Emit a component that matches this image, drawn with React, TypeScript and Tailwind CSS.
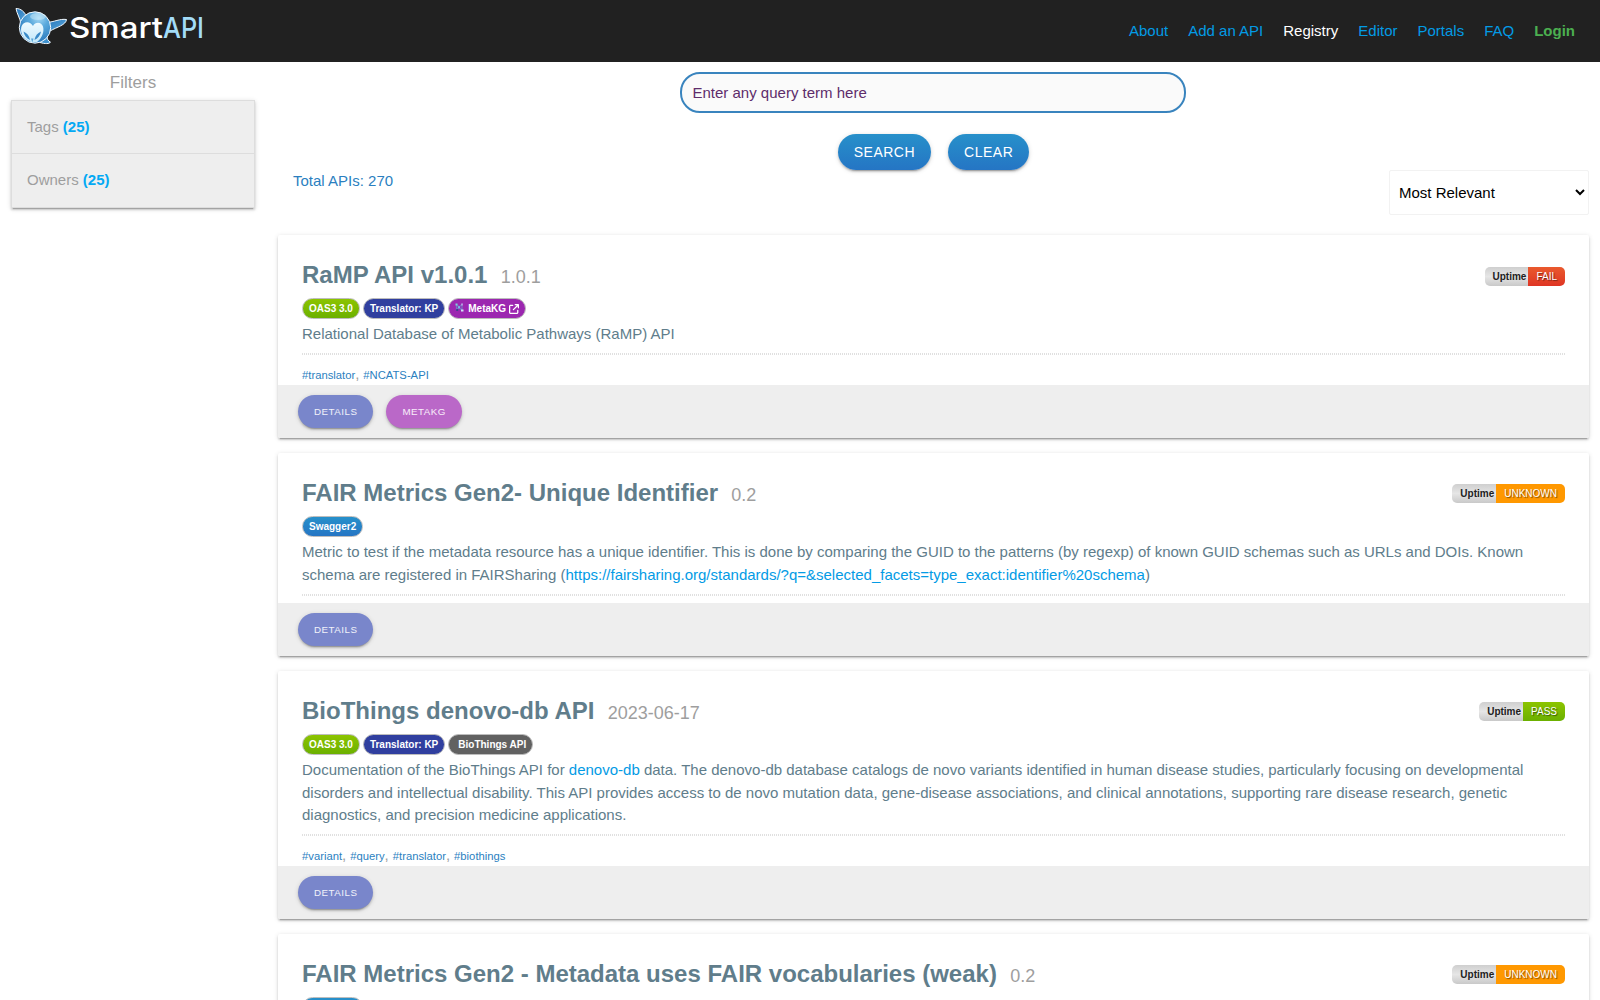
import React from "react";
import { FaArrowUpRightFromSquare } from "react-icons/fa6";

const shadow =
  "shadow-[0_2px_2px_0_rgba(0,0,0,0.14),0_3px_1px_-2px_rgba(0,0,0,0.2),0_1px_5px_0_rgba(0,0,0,0.14)]";
const blueGradient = "bg-linear-to-b from-[#2790ca] to-[#2575c4]";
const greenGradient = "bg-linear-to-b from-[#8cc400] to-[#6bb000]";

type Status = "FAIL" | "UNKNOWN" | "PASS";
type Badge = "oas3" | "swagger" | "translator" | "metakg" | "biothings";

interface Api {
  title: string;
  version: string;
  status: Status;
  badges: Badge[];
  description: React.ReactNode;
  tags: string[];
  metakg?: boolean;
  bodyHeight: string;
}

const statusClass: Record<Status, string> = {
  FAIL: "bg-linear-to-b from-[#e9592d] to-[#df3424]",
  UNKNOWN: "bg-[#ff9800]",
  PASS: greenGradient,
};

const apis: Api[] = [
  {
    title: "RaMP API v1.0.1",
    version: "1.0.1",
    status: "FAIL",
    badges: ["oas3", "translator", "metakg"],
    description: "Relational Database of Metabolic Pathways (RaMP) API",
    tags: ["#translator", "#NCATS-API"],
    metakg: true,
    bodyHeight: "h-[150px]",
  },
  {
    title: "FAIR Metrics Gen2- Unique Identifier",
    version: "0.2",
    status: "UNKNOWN",
    badges: ["swagger"],
    description: (
      <>
        Metric to test if the metadata resource has a unique identifier. This is done by comparing the GUID to the
        patterns (by regexp) of known GUID schemas such as URLs and DOIs. Known schema are registered in FAIRSharing (
        <a className="text-[#039be5]">
          https://fairsharing.org/standards/?q=&amp;selected_facets=type_exact:identifier%20schema
        </a>
        )
      </>
    ),
    tags: [],
    bodyHeight: "h-[150px]",
  },
  {
    title: "BioThings denovo-db API",
    version: "2023-06-17",
    status: "PASS",
    badges: ["oas3", "translator", "biothings"],
    description: (
      <>
        Documentation of the BioThings API for <a className="text-[#039be5]">denovo-db</a> data. The denovo-db database
        catalogs de novo variants identified in human disease studies, particularly focusing on developmental disorders
        and intellectual disability. This API provides access to de novo mutation data, gene-disease associations, and
        clinical annotations, supporting rare disease research, genetic diagnostics, and precision medicine
        applications.
      </>
    ),
    tags: ["#variant", "#query", "#translator", "#biothings"],
    bodyHeight: "h-[195px]",
  },
  {
    title: "FAIR Metrics Gen2 - Metadata uses FAIR vocabularies (weak)",
    version: "0.2",
    status: "UNKNOWN",
    badges: ["swagger"],
    description: "",
    tags: [],
    bodyHeight: "h-[150px]",
  },
];

function Logo() {
  return (
    <svg width="200" height="42" viewBox="0 0 200 42" className="block">
      <defs>
        <radialGradient id="body" cx="0.62" cy="0.2" r="0.85">
          <stop offset="0" stopColor="#a4d8f4" />
          <stop offset="0.35" stopColor="#5aa9dc" />
          <stop offset="1" stopColor="#2272b8" />
        </radialGradient>
        <linearGradient id="wing" x1="0" y1="0" x2="1" y2="1">
          <stop offset="0" stopColor="#2473b9" />
          <stop offset="1" stopColor="#5fade0" />
        </linearGradient>
        <linearGradient id="face" x1="0" y1="0" x2="0" y2="1">
          <stop offset="0" stopColor="#eefaff" />
          <stop offset="1" stopColor="#c3e8f9" />
        </linearGradient>
      </defs>
      <g stroke="#f4faff" strokeWidth="1" strokeLinejoin="round">
        <path d="M1 1.500 C6 1.500 10 5 11.500 10 L6 17 C5 11 2 7 1 1.500Z" fill="url(#wing)" />
        <path d="M32 15.500 C39 15 45 11.500 51.500 12.500 C51 18 42 20 35 24Z" fill="url(#wing)" />
        <path d="M32 29 C32 32 33 34 35.500 35 C34.500 37 30 37 25 35.500Z" fill="#3f92cf" />
        <circle cx="20" cy="20.500" r="15.700" fill="url(#body)" />
      </g>
      <path
        d="M18 19 C20 14.500 26.500 14.500 28 19.500 C29.500 25 27 31 22 35 C19 36.500 12 34.500 8.500 30 C5.500 26 5 19.500 8.500 16.500 C12 14 16 15.500 18 19Z"
        fill="url(#face)"
      />
      <path d="M8.500 24.500 C12 26 14.500 29 15 33 C11.500 31.500 9 28 8.500 24.500Z" fill="#3a8ac8" />
      <path d="M26 24.500 C22.500 26 20 29 19.500 33 C23 31.500 25.500 28 26 24.500Z" fill="#3a8ac8" />
      <path d="M16 31.500 H18.500 L17.300 35.500Z" fill="#5aa6d8" />
      <ellipse cx="23" cy="9.500" rx="8" ry="3.500" fill="#d5effb" opacity="0.45" />
      <text
        x="54"
        y="31"
        fontFamily="Inter, 'Liberation Sans', sans-serif"
        fontSize="29"
        fontWeight="500"
        fill="#ffffff"
        textLength="94"
        lengthAdjust="spacingAndGlyphs"
      >
        Smart
      </text>
      <text
        x="148"
        y="31"
        fontFamily="Inter, 'Liberation Sans', sans-serif"
        fontSize="29"
        fontWeight="500"
        fill="#a3dcf8"
        textLength="41"
        lengthAdjust="spacingAndGlyphs"
      >
        API
      </text>
    </svg>
  );
}

function MetaKgGlyph() {
  return (
    <svg width="9" height="9" viewBox="0 0 9 9" className="mr-[4px] mb-[3px]">
      <path d="M1.500 1.500 V7 M1.500 1.500 L4 4 L7 1.500 V7.500 M2 7 L4 4 L7 7.500" stroke="#7773c4" strokeWidth="1.200" fill="none" />
      <rect x="0.500" y="0.500" width="2" height="2" fill="#7fd0d8" />
      <rect x="3" y="3.200" width="2" height="2" fill="#7cb6e6" />
      <rect x="6.200" y="0.500" width="1.600" height="2" fill="#c3a7e6" />
      <rect x="1.200" y="6" width="2" height="2" fill="#3f4190" />
      <rect x="6" y="6.500" width="2.500" height="2" fill="#cfe3f5" />
    </svg>
  );
}

function BadgePill({ kind }: { kind: Badge }) {
  const base =
    "flex h-[21px] items-center rounded-[10.5px] border border-[#bdbdbd] px-[6px] pt-[1px] text-[10px] leading-none font-bold text-white";
  switch (kind) {
    case "oas3":
      return <span className={`${base} ${greenGradient}`}>OAS3 3.0</span>;
    case "swagger":
      return <span className={`${base} ${blueGradient}`}>Swagger2</span>;
    case "translator":
      return <span className={`${base} bg-[#303f9f]`}>Translator: KP</span>;
    case "metakg":
      return (
        <span className={`${base} bg-[#9c27b0]`}>
          <MetaKgGlyph />
          MetaKG
          <FaArrowUpRightFromSquare className="mb-[1px] ml-[3px] h-[10px] w-[10px]" />
        </span>
      );
    case "biothings":
      return <span className={`${base} bg-[#616161] pl-[9px]`}>BioThings API</span>;
  }
}

function Uptime({ status }: { status: Status }) {
  return (
    <div className="flex h-[19px] overflow-hidden rounded-[5px] text-[10px] leading-[19px]">
      <span className="bg-linear-to-b from-[#cfcfcf] via-[#e6e6e6] to-[#c9c9c9] pr-[2px] pl-[8px] font-bold text-[#212121]">
        Uptime
      </span>
      <span className={`px-[8px] text-white [text-shadow:1px_1px_1px_rgba(0,0,0,0.5)] ${statusClass[status]}`}>
        {status}
      </span>
    </div>
  );
}

function RoundButton({ className, children }: { className: string; children: React.ReactNode }) {
  return (
    <button
      className={`h-[33px] rounded-[17px] px-[16px] pt-[1px] text-[9.75px] tracking-[0.5px] text-white/90 uppercase ${shadow} ${className}`}
    >
      {children}
    </button>
  );
}

function ApiCard({ api }: { api: Api }) {
  return (
    <article className={`mb-[15px] rounded-[2px] bg-white ${shadow}`}>
      <div className={`flex flex-col px-[24px] pt-[24px] ${api.bodyHeight}`}>
        <div className="flex h-[32px] shrink-0 items-start justify-between">
          <h2 className="text-[24px] leading-[32px] font-bold text-[#607d8b]">
            {api.title}
            <span className="ml-[13.300px] text-[18px] font-normal text-[#9e9e9e]">{api.version}</span>
          </h2>
          <div className={api.status === "FAIL" ? "pt-[8px]" : "pt-[7px]"}>
            <Uptime status={api.status} />
          </div>
        </div>
        <div className="mt-[7px] flex h-[21px] shrink-0 gap-[3px]">
          {api.badges.map((b) => (
            <BadgePill key={b} kind={b} />
          ))}
        </div>
        <p className="mt-[4px] text-[15px] leading-[22.5px] text-[#607d8b]">{api.description}</p>
        <div className="mt-[7.5px] h-[2px] shrink-0 bg-[repeating-linear-gradient(90deg,#e0e0e0_0_1px,transparent_1px_2px)]" />
        {api.tags.length > 0 && (
          <div className="mt-[10.5px] flex h-[18px] text-[11.25px] leading-[18px] text-[#2b7fbf]">
            {api.tags.map((tag, i) => (
              <span key={tag} className="mr-[4px]">
                {tag}
                {i < api.tags.length - 1 && <span className="text-[15px] leading-none text-[#9e9e9e]">,</span>}
              </span>
            ))}
          </div>
        )}
      </div>
      <div className="flex h-[53px] items-center gap-[13px] rounded-b-[2px] bg-[#eeeeee] px-[20px]">
        <RoundButton className="bg-[#7986cb]">Details</RoundButton>
        {api.metakg && <RoundButton className="bg-[#ba68c8]">MetaKG</RoundButton>}
      </div>
    </article>
  );
}

const navItems = ["About", "Add an API", "Registry", "Editor", "Portals", "FAQ"];

export default function App() {
  return (
    <div className="h-[1000px] overflow-hidden bg-white font-['Liberation_Sans',Arial,sans-serif] text-[15px] leading-[22.5px]">
      <header className="flex h-[62px] items-center justify-between bg-[#212121] pr-[25px] pl-[15px]">
        <div className="mb-[6px]">
          <Logo />
        </div>
        <nav className="flex gap-[20px]">
          {navItems.map((item) => (
            <a key={item} className={item === "Registry" ? "text-white" : "text-[#039be5]"}>
              {item}
            </a>
          ))}
          <a className="font-bold text-[#4caf50]">Login</a>
        </nav>
      </header>

      <div className="flex">
        <aside className="w-[266px] shrink-0 px-[11px] pt-[8px]">
          <h3 className="h-[30px] text-center text-[17px] leading-[25px] text-[#9e9e9e]">Filters</h3>
          <ul className={`h-[108px] border border-[#dddddd] bg-[#eeeeee] text-[#9e9e9e] ${shadow}`}>
            <li className="flex h-[53px] items-center border-b border-[#dddddd] px-[15px]">
              Tags&nbsp;<b className="text-[#03a9f4]">(25)</b>
            </li>
            <li className="flex h-[53px] items-center px-[15px]">
              Owners&nbsp;<b className="text-[#03a9f4]">(25)</b>
            </li>
          </ul>
        </aside>

        <main className="ml-[12px] w-[1311px]">
          <div className="flex flex-col items-center pt-[10px]">
            <input
              className="mr-[1px] h-[41px] w-[506px] rounded-[20px] border-2 border-[#3984be] bg-[#fafafa] px-[10.500px] text-[15px] placeholder:text-[#5e2d6b] placeholder:opacity-100"
              placeholder="Enter any query term here"
            />
            <div className="mt-[21px] flex gap-[17px]">
              <button
                className={`h-[36px] rounded-[18px] px-[16px] text-[14px] tracking-[0.5px] text-white ${blueGradient} ${shadow}`}
              >
                SEARCH
              </button>
              <button
                className={`h-[36px] rounded-[18px] px-[16px] text-[14px] tracking-[0.5px] text-white ${blueGradient} ${shadow}`}
              >
                CLEAR
              </button>
            </div>
          </div>
          <div className="mb-[20px] flex h-[45px] justify-between">
            <span className="pl-[15px] text-[#2b7fbf]">Total APIs: 270</span>
            <select className="h-[45px] w-[200px] rounded-[2px] border border-[#f2f2f2] bg-white p-[5px] text-[15px] text-black">
              <option>Most Relevant</option>
            </select>
          </div>
          {apis.map((api) => (
            <ApiCard key={api.title} api={api} />
          ))}
        </main>
      </div>
    </div>
  );
}
